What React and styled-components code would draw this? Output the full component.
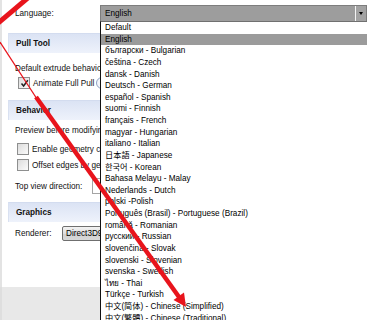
import React from "react";
import styled, { createGlobalStyle } from "styled-components";

const Global = createGlobalStyle`
  html, body { margin: 0; padding: 0; background: #fff; }
  * { box-sizing: border-box; }
`;

const FONT = `"Liberation Sans", "Noto Sans CJK SC", "Noto Sans CJK KR", "DejaVu Sans", sans-serif`;

const Window = styled.div`
  position: relative;
  width: 367px;
  height: 320px;
  overflow: hidden;
  display: flex;
  flex-direction: column;
  background: #fff;
  font-family: ${FONT};
  font-size: 8.2px;
  color: #111;
`;

const Panel = styled.div`
  flex: 1;
  display: flex;
  flex-direction: column;
  border-left: 2px solid #e3e3e3;
`;

const LanguageRow = styled.div`
  display: grid;
  grid-template-columns: 98px 1fr;
  align-items: center;
  height: 26px;
`;

const FieldLabel = styled.span`
  padding-left: 13px;
  white-space: nowrap;
  flex: none;
  width: ${(p) => (p.$w ? `${p.$w}px` : "auto")};
`;

const Combo = styled.div`
  height: 17px;
  display: flex;
  align-items: stretch;
  border: 1px solid #7d7d7d;
  border-bottom-color: #6a6a6a;
  background: #9d9d9d;
`;

const ComboText = styled.span`
  flex: 1;
  display: flex;
  align-items: center;
  padding-left: 4px;
  color: #000;
`;

const ComboButton = styled.span`
  width: 11px;
  border-left: 1px solid #f4f4f4;
  background: #a3a3a3;
  display: flex;
  align-items: center;
  justify-content: center;
  &::after {
    content: "";
    border-left: 2.5px solid transparent;
    border-right: 2.5px solid transparent;
    border-top: 3px solid #000;
  }
`;

const SectionHeader = styled.div`
  margin-left: 6px;
  margin-top: ${(p) => p.$mt}px;
  height: 20px;
  padding-left: 7px;
  display: flex;
  align-items: center;
  font-weight: bold;
  color: #111;
  background: linear-gradient(#dbe3f4, #eef2fb);
  border-top: 1px solid #d3dcef;
  border-left: 1px solid #d9e1f1;
`;

const Row = styled.div`
  display: flex;
  align-items: center;
  height: ${(p) => p.$h || 14}px;
  margin-top: ${(p) => p.$mt || 0}px;
  padding-left: ${(p) => p.$pl ?? 13}px;
  white-space: nowrap;
`;

const Box = styled.span`
  flex: none;
  width: 12px;
  height: 12px;
  border: 1px solid #8e8f8f;
  background: linear-gradient(135deg, #dcdcdc, #fbfbfb);
  display: flex;
  align-items: center;
  justify-content: center;
  margin-right: 3px;
`;

const Radio = styled.span`
  flex: none;
  width: 12px;
  height: 12px;
  border-radius: 50%;
  border: 1px solid #8ea3c4;
  background: #f4f6fa;
  margin-left: 2px;
`;

const SmallCombo = styled.span`
  flex: none;
  width: 80px;
  height: 16px;
  border: 1px solid #a5a5a5;
  background: #fff;
`;

const PushButton = styled.span`
  flex: none;
  width: 80px;
  height: 15px;
  border: 1px solid #6f6f6f;
  border-radius: 2px;
  background: linear-gradient(#f3f3f3, #dedede 50%, #d0d0d0 51%, #d8d8d8);
  display: flex;
  align-items: center;
  padding-left: 3px;
  color: #000;
`;

const Footer = styled.div`
  height: 33px;
  flex: none;
  background: #e8e8e8;
  border-left: 2px solid #dedede;
`;

const ListBox = styled.div`
  position: absolute;
  left: 100px;
  top: 21px;
  right: 0;
  bottom: 0;
  background: #fff;
  border-top: 1px solid #707070;
  border-left: 1px solid #111;
  overflow: hidden;
`;

const Item = styled.div`
  height: 11.64px;
  line-height: 11.64px;
  padding-left: 4px;
  white-space: nowrap;
  color: #000;
  background: ${(p) => (p.$active ? "#9b9b9b" : "transparent")};
`;

const Overlay = styled.svg`
  position: absolute;
  left: 0;
  top: 0;
  width: 367px;
  height: 320px;
  pointer-events: none;
`;

const languages = [
  "Default",
  "English",
  "български - Bulgarian",
  "čeština - Czech",
  "dansk - Danish",
  "Deutsch - German",
  "español - Spanish",
  "suomi - Finnish",
  "français - French",
  "magyar - Hungarian",
  "italiano - Italian",
  "日本語 - Japanese",
  "한국어 - Korean",
  "Bahasa Melayu - Malay",
  "Nederlands - Dutch",
  "polski -Polish",
  "Português (Brasil) - Portuguese (Brazil)",
  "română - Romanian",
  "русский - Russian",
  "slovenčina - Slovak",
  "slovenski - Slovenian",
  "svenska - Swedish",
  "ไทย - Thai",
  "Türkçe - Turkish",
  "中文(简体) - Chinese (Simplified)",
  "中文(繁體) - Chinese (Traditional)",
];

const Check = () => (
  <svg width="9" height="9" viewBox="0 0 9 9">
    <path d="M1.5 4.5 L3.6 7 L7.8 1.2" fill="none" stroke="#222" strokeWidth="1.5" />
  </svg>
);

export default function App() {
  return (
    <>
      <Global />
      <Window>
        <Panel>
          <LanguageRow>
            <FieldLabel>Language:</FieldLabel>
            <Combo>
              <ComboText>English</ComboText>
              <ComboButton />
            </Combo>
          </LanguageRow>

          <SectionHeader $mt={7}>Pull Tool</SectionHeader>
          <Row $mt={8}>Default extrude behavior:</Row>
          <Row $mt={1} $pl={16}>
            <Box>
              <Check />
            </Box>
            Animate Full Pull
            <Radio />
          </Row>

          <SectionHeader $mt={10}>Behavior</SectionHeader>
          <Row $mt={3}>Preview before modifying</Row>
          <Row $mt={5} $pl={15}>
            <Box />
            Enable geometry constraints
          </Row>
          <Row $mt={2} $pl={15}>
            <Box />
            Offset edges by geometry
          </Row>
          <Row $mt={6} $h={16} $pl={0}>
            <FieldLabel $w={90}>Top view direction:</FieldLabel>
            <SmallCombo />
          </Row>

          <SectionHeader $mt={8}>Graphics</SectionHeader>
          <Row $mt={3} $h={16} $pl={0}>
            <FieldLabel $w={60}>Renderer:</FieldLabel>
            <PushButton>Direct3D9</PushButton>
          </Row>
        </Panel>
        <Footer />

        <ListBox>
          {languages.map((l) => (
            <Item key={l} $active={l === "English"}>
              {l}
            </Item>
          ))}
        </ListBox>

        <Overlay viewBox="0 0 367 320">
          <line x1="29" y1="-3" x2="-3" y2="24" stroke="#e8141c" strokeWidth="5" />
          <line x1="0" y1="42" x2="37" y2="99" stroke="#e8141c" strokeWidth="1.3" />
          <line x1="36" y1="97" x2="179" y2="297" stroke="#e8141c" strokeWidth="4.5" />
          <polygon points="186,307 173.5,300 184,292.5" fill="#e8141c" />
        </Overlay>
      </Window>
    </>
  );
}
